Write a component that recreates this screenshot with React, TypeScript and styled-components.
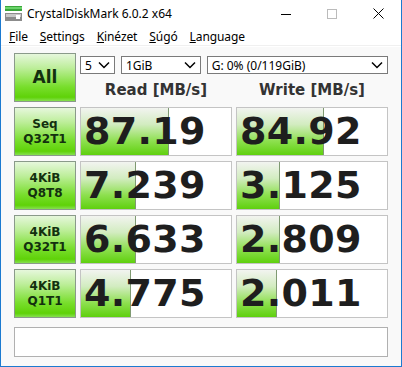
import React from "react";
import styled, { createGlobalStyle } from "styled-components";

const Global = createGlobalStyle`
  html, body { margin: 0; padding: 0; background: #ffffff; }
  * { box-sizing: border-box; }
`;

const Window = styled.div`
  width: 402px;
  height: 367px;
  background: #ffffff;
  border: 1px solid #1c7ad0;
  border-top: none;
  display: flex;
  flex-direction: column;
  font-family: "Noto Sans", "DejaVu Sans", sans-serif;
  overflow: hidden;
`;

const TitleBar = styled.div`
  height: 27px;
  display: flex;
  align-items: center;
  padding-left: 4px;
  color: #000;
  font-size: 12px;
`;

const TitleText = styled.span`
  margin-left: 4px;
  flex: 1;
`;

const Ctrl = styled.div`
  width: 46px;
  height: 27px;
  display: flex;
  align-items: center;
  justify-content: center;
`;

const MenuBar = styled.div`
  height: 19px;
  display: flex;
  align-items: center;
  padding-left: 2px;
  font-size: 12px;
  color: #000;
  border-bottom: 1px solid #f0f0f0;
  margin-bottom: 1px;
`;

const MenuItem = styled.span`
  padding: 0 6px;
  letter-spacing: -0.1px;
  u { text-decoration: underline; }
`;

const Content = styled.div`
  flex: 1;
  background: #f9f9f9;
  padding: 6px 12px 0 13px;
`;

const Grid = styled.div`
  display: grid;
  grid-template-columns: 62px 152px 152px;
  grid-auto-rows: 49px;
  column-gap: 4px;
  row-gap: 5px;
`;

const GreenButton = styled.div<{ $big?: boolean }>`
  border: 1px solid #8a9a8a;
  background: linear-gradient(#e6f7dc 0%, #bdee9a 30%, #78de2c 70%, #5fd208 92%, #86e050 100%);
  display: flex;
  align-items: center;
  justify-content: center;
  text-align: center;
  font-family: "DejaVu Sans", sans-serif;
  font-weight: bold;
  color: #13300f;
  font-size: ${(p) => (p.$big ? "17px" : "12px")};
  line-height: 15px;
`;

const TopCell = styled.div`
  grid-column: 2 / 4;
  display: flex;
  flex-direction: column;
`;

const Selects = styled.div`
  display: flex;
  gap: 6px;
  margin-top: 3px;
`;

const SelectBox = styled.div<{ $w: number }>`
  width: ${(p) => p.$w}px;
  height: 18px;
  border: 1px solid #7a7a7a;
  background: #fff;
  display: flex;
  align-items: center;
  justify-content: space-between;
  padding: 0 4px 0 4px;
  font-size: 12px;
  color: #000;
`;

const Headers = styled.div`
  flex: 1;
  display: grid;
  grid-template-columns: 152px 152px;
  column-gap: 4px;
  align-items: center;
`;

const Header = styled.div`
  text-align: center;
  font-family: "DejaVu Sans", sans-serif;
  font-weight: bold;
  font-size: 15px;
  color: #333;
  padding-top: 3px;
`;

const ValueBox = styled.div`
  position: relative;
  border: 1px solid #c4c4c4;
  background: #ffffff;
  overflow: hidden;
`;

const Bar = styled.div`
  position: absolute;
  left: 0;
  top: 0;
  bottom: 0;
  border-right: 1px solid #7f9a72;
  background: linear-gradient(#f2f4f0 0%, #d2ecc0 35%, #8ee050 70%, #5fd00e 100%);
`;

const Value = styled.div`
  position: relative;
  height: 100%;
  display: flex;
  align-items: center;
  padding-left: 3px;
  padding-bottom: 2px;
  font-family: "DejaVu Sans", sans-serif;
  font-weight: bold;
  font-size: 38px;
  letter-spacing: 0.3px;
  color: #1e1e1e;
`;

const Status = styled.div`
  margin-top: 9px;
  height: 30px;
  border: 1px solid #b0b0b0;
  background: #ffffff;
  width: 374px;
`;

const Chevron = () => (
  <svg width="12" height="8" viewBox="0 0 12 8">
    <path d="M1 1.5 L6 6.5 L11 1.5" fill="none" stroke="#000" strokeWidth="1.5" />
  </svg>
);

const AppIcon = () => (
  <svg width="18" height="16" viewBox="0 0 18 16">
    <rect x="0" y="0" width="17" height="5" fill="#3aa63a" />
    <rect x="0" y="1" width="17" height="2" fill="#6ad46a" />
    <rect x="0" y="7" width="17" height="8" fill="#8c8c8c" />
    <rect x="1" y="8" width="15" height="3" fill="#c8c8c8" />
    <rect x="11" y="9" width="4" height="4" fill="#ffffff" />
  </svg>
);

const rows = [
  { label: ["Seq", "Q32T1"], read: "87.19", write: "84.92", rw: 88, ww: 87 },
  { label: ["4KiB", "Q8T8"], read: "7.239", write: "3.125", rw: 55, ww: 43 },
  { label: ["4KiB", "Q32T1"], read: "6.633", write: "2.809", rw: 55, ww: 43 },
  { label: ["4KiB", "Q1T1"], read: "4.775", write: "2.011", rw: 50, ww: 40 },
];

export default function App() {
  return (
    <>
      <Global />
      <Window>
        <TitleBar>
          <AppIcon />
          <TitleText>CrystalDiskMark 6.0.2 x64</TitleText>
          <Ctrl>
            <svg width="10" height="10" viewBox="0 0 10 10">
              <path d="M0 5.5 H10" stroke="#000" strokeWidth="1" />
            </svg>
          </Ctrl>
          <Ctrl>
            <svg width="10" height="10" viewBox="0 0 10 10">
              <rect x="0.5" y="0.5" width="9" height="9" fill="none" stroke="#bbb" />
            </svg>
          </Ctrl>
          <Ctrl>
            <svg width="11" height="11" viewBox="0 0 11 11">
              <path d="M0.5 0.5 L10.5 10.5 M10.5 0.5 L0.5 10.5" stroke="#000" strokeWidth="1" />
            </svg>
          </Ctrl>
        </TitleBar>
        <MenuBar>
          <MenuItem><u>F</u>ile</MenuItem>
          <MenuItem><u>S</u>ettings</MenuItem>
          <MenuItem><u>K</u>inézet</MenuItem>
          <MenuItem><u>S</u>úgó</MenuItem>
          <MenuItem><u>L</u>anguage</MenuItem>
        </MenuBar>
        <Content>
          <Grid>
            <GreenButton $big>All</GreenButton>
            <TopCell>
              <Selects>
                <SelectBox $w={35}>5<Chevron /></SelectBox>
                <SelectBox $w={80}>1GiB<Chevron /></SelectBox>
                <SelectBox $w={182}>G: 0% (0/119GiB)<Chevron /></SelectBox>
              </Selects>
              <Headers>
                <Header>Read [MB/s]</Header>
                <Header>Write [MB/s]</Header>
              </Headers>
            </TopCell>
            {rows.map((r) => (
              <React.Fragment key={r.label.join(" ")}>
                <GreenButton>
                  {r.label[0]}
                  <br />
                  {r.label[1]}
                </GreenButton>
                <ValueBox>
                  <Bar style={{ width: r.rw }} />
                  <Value>{r.read}</Value>
                </ValueBox>
                <ValueBox>
                  <Bar style={{ width: r.ww }} />
                  <Value>{r.write}</Value>
                </ValueBox>
              </React.Fragment>
            ))}
          </Grid>
          <Status />
        </Content>
      </Window>
    </>
  );
}
